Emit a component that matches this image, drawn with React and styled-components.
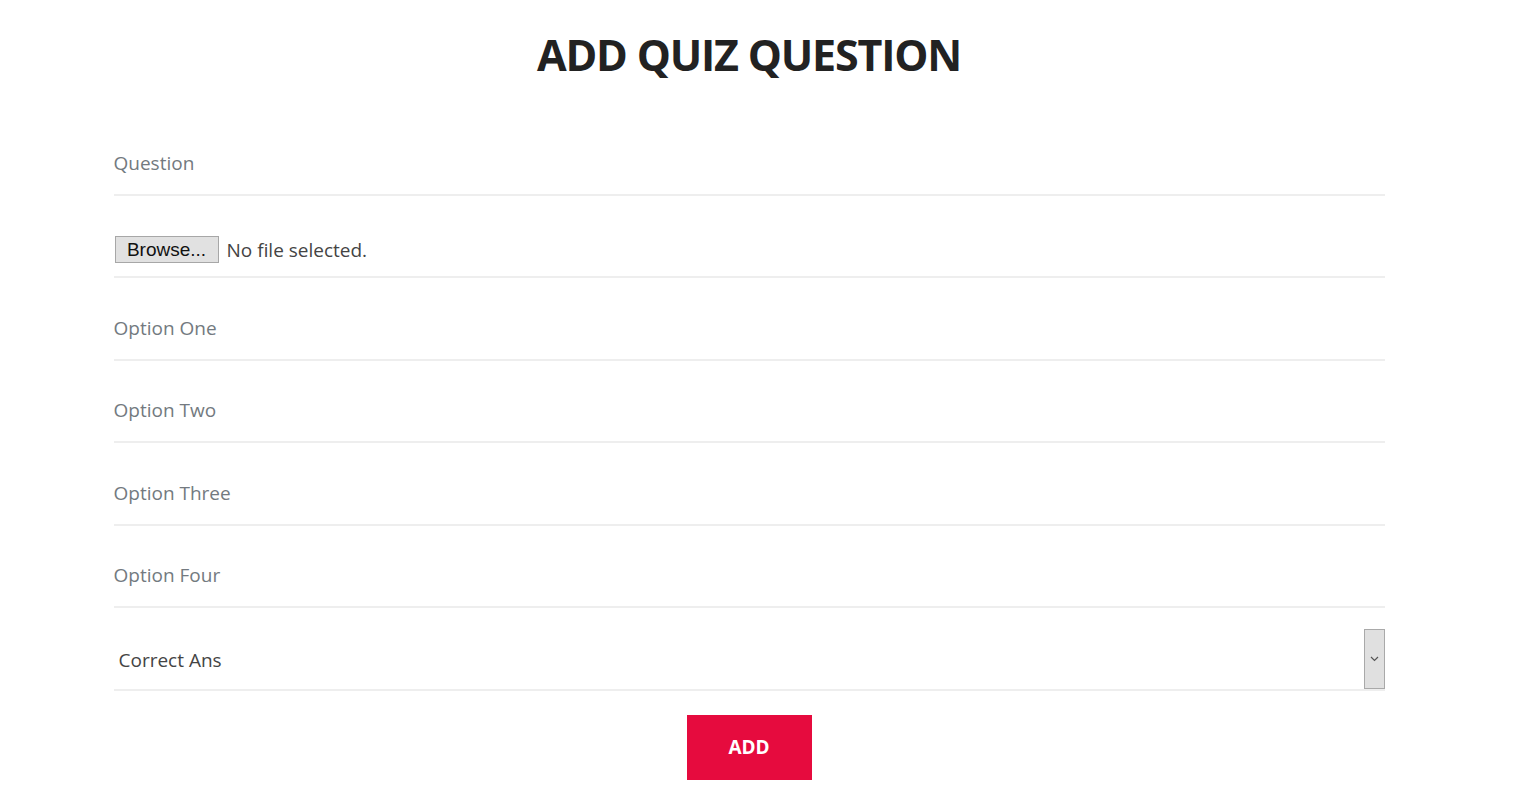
import React from "react";
import styled, { createGlobalStyle } from "styled-components";

const Global = createGlobalStyle`
  html, body { margin: 0; padding: 0; background: #fff; }
  body { font-family: "Open Sans", "Noto Sans", sans-serif; }
  * { box-sizing: border-box; }
`;

const Page = styled.div`
  width: 1498px;
  padding-top: 25px;
`;

const Title = styled.h1`
  margin: 0 0 28px;
  text-align: center;
  font-family: "Open Sans", sans-serif;
  font-weight: 700;
  font-size: 43px;
  line-height: 60px;
  letter-spacing: -1.2px;
  color: #222;
`;

const Form = styled.form`
  width: 1271px;
  margin: 0 auto;
  display: flex;
  flex-direction: column;
`;

const Field = styled.div`
  height: ${(p) => p.$h ?? 82.5}px;
  display: flex;
  align-items: flex-end;
  border-bottom: 2px solid #eeeeee;
  padding-bottom: ${(p) => p.$pb ?? 18}px;
`;

const TextInput = styled.input`
  width: 100%;
  border: none;
  outline: none;
  padding: 0;
  height: 26px;
  font-family: "Open Sans", sans-serif;
  font-size: 19px;
  color: #333;
  background: transparent;
  &::placeholder { color: #737a80; opacity: 1; }
`;

const FileLabel = styled.label`
  display: flex;
  align-items: center;
  gap: 8px;
  cursor: pointer;
`;

const HiddenFile = styled.input`
  display: none;
`;

const BrowseButton = styled.span`
  display: inline-flex;
  align-items: center;
  justify-content: center;
  width: 104px;
  height: 27px;
  margin-left: 1px;
  background: #e1e1e1;
  border: 1px solid #a7a7a7;
  font-family: "Liberation Sans", Arial, sans-serif;
  font-size: 19px;
  color: #111;
`;

const FileText = styled.span`
  font-family: "Open Sans", sans-serif;
  font-size: 19px;
  color: #444;
`;

const SelectBox = styled.div`
  width: 100%;
  height: 60px;
  display: flex;
  align-items: center;
`;

const SelectText = styled.span`
  flex: 1;
  padding-left: 5px;
  padding-top: 2px;
  font-family: "Open Sans", sans-serif;
  font-size: 19px;
  color: #444;
`;

const ArrowBox = styled.span`
  width: 21px;
  height: 60px;
  display: flex;
  align-items: center;
  justify-content: center;
  background: #e0e0e0;
  border: 1px solid #a9a9a9;
`;

const ButtonRow = styled.div`
  display: flex;
  justify-content: center;
  padding-top: 24px;
`;

const AddButton = styled.button`
  width: 125px;
  height: 65px;
  border: none;
  background: #e60b3e;
  color: #fff;
  font-family: "Open Sans", sans-serif;
  font-weight: 700;
  font-size: 19px;
  cursor: pointer;
`;

export default function App() {
  return (
    <>
      <Global />
      <Page>
        <Title>ADD QUIZ QUESTION</Title>
        <Form onSubmit={(e) => e.preventDefault()}>
          <Field>
            <TextInput placeholder="Question" />
          </Field>
          <Field $pb={13}>
            <FileLabel>
              <HiddenFile type="file" />
              <BrowseButton>Browse...</BrowseButton>
              <FileText>No file selected.</FileText>
            </FileLabel>
          </Field>
          <Field>
            <TextInput placeholder="Option One" />
          </Field>
          <Field>
            <TextInput placeholder="Option Two" />
          </Field>
          <Field>
            <TextInput placeholder="Option Three" />
          </Field>
          <Field>
            <TextInput placeholder="Option Four" />
          </Field>
          <Field $pb={0}>
            <SelectBox>
              <SelectText>Correct Ans</SelectText>
              <ArrowBox>
                <svg width="9" height="6" viewBox="0 0 9 6">
                  <path d="M1 1l3.5 3.5L8 1" fill="none" stroke="#555" strokeWidth="1.2" />
                </svg>
              </ArrowBox>
            </SelectBox>
          </Field>
          <ButtonRow>
            <AddButton type="submit">ADD</AddButton>
          </ButtonRow>
        </Form>
      </Page>
    </>
  );
}
